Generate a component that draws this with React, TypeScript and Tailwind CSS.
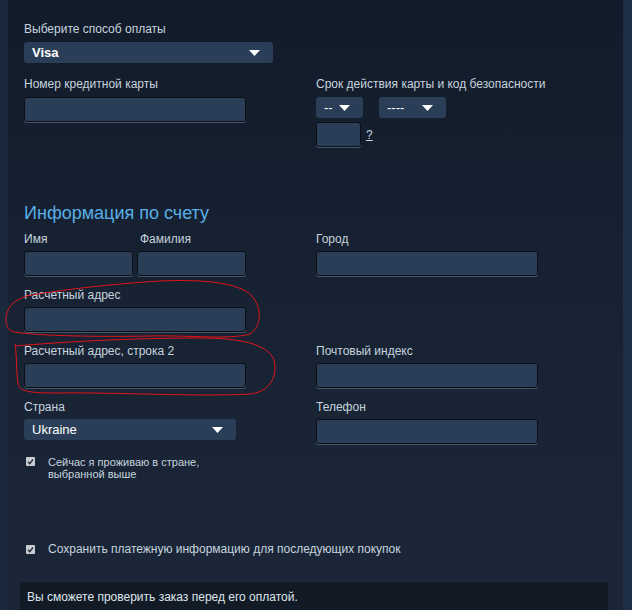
import React from 'react';

const font = { fontFamily: '"Liberation Sans", Arial, sans-serif' };

const Arrow = () => (
  <svg width="11" height="6" viewBox="0 0 11 6" className="shrink-0">
    <path d="M0 0h11L5.5 6z" fill="#fff" />
  </svg>
);

const Select = ({ value, className }: { value: string; className: string }) => (
  <div className={`flex h-[21px] items-center justify-between rounded-[3px] bg-[#2a3e58] pl-2 pr-[13px] text-[13px] text-white ${className}`}>
    <span>{value}</span>
    <Arrow />
  </div>
);

const Input = ({ className }: { className: string }) => (
  <div className={`h-[25px] rounded-[3px] border border-[#0b0f15] bg-[#2a3e58] shadow-[0_1px_0_#46566a] ${className}`} />
);

const Label = ({ children, className = '' }: { children: React.ReactNode; className?: string }) => (
  <div className={`h-4 text-[12px] leading-4 text-[#c6d4df] ${className}`}>{children}</div>
);

const Check = () => (
  <div className="flex h-[9px] w-[9px] shrink-0 items-center justify-center rounded-[1px] bg-[#c9ccd1]">
    <svg width="7" height="7" viewBox="0 0 7 7">
      <path d="M1 3.8l1.8 1.8L6 1.4" stroke="#2b2f36" strokeWidth="1.5" fill="none" />
    </svg>
  </div>
);

// hand-drawn red rings over the address fields
const Scribbles = () => (
  <svg className="pointer-events-none absolute left-0 top-0" width="632" height="610" fill="none" stroke="#e0141b" strokeWidth="1">
    <path d="M26 296 C 60 290, 110 284, 160 281 C 205 279, 240 283, 252 296 C 262 308, 262 326, 250 334 C 230 340, 190 335, 150 336 C 100 337, 40 336, 14 332 C 2 328, 5 312, 12 304 C 16 300, 22 298, 26 296" />
    <path d="M16 346 C 60 342, 130 338, 200 338 C 240 338, 268 344, 274 360 C 278 376, 270 392, 250 394 C 200 397, 110 392, 60 393 C 30 393, 20 392, 18 384 C 16 370, 17 355, 15 344" />
  </svg>
);

export default function App() {
  return (
    <div className="relative flex h-[610px] w-[632px] overflow-hidden bg-[#172233]" style={font}>
      <div className="w-2 bg-[#1a293b]" />
      <div className="relative flex-1 bg-gradient-to-b from-[#121b29] via-[#172233] to-[#1b2738] pl-4 pt-[21px]">
        <Label>Выберите способ оплаты</Label>
        <Select value="Visa" className="mt-[5px] w-[249px] font-bold" />

        <div className="mt-[13px] flex">
          <div className="w-[292px]">
            <Label>Номер кредитной карты</Label>
            <Input className="mt-[5px] w-[222px]" />
          </div>
          <div>
            <Label>Срок действия карты и код безопасности</Label>
            <div className="mt-[5px] flex gap-4">
              <Select value="--" className="w-[47px]" />
              <Select value="----" className="w-[67px]" />
            </div>
            <div className="mt-[4px] flex items-center gap-[5px]">
              <Input className="w-[45px]" />
              <span className="text-[12px] text-[#c6d4df] underline">?</span>
            </div>
          </div>
        </div>

        <div className="mt-[56px] h-5 text-[18px] leading-5 text-[#5aafe8]">Информация по счету</div>

        <div className="mt-2 flex">
          <div className="w-[292px]">
            <div className="flex gap-1">
              <div>
                <Label>Имя</Label>
                <Input className="mt-1 w-[109px]" />
              </div>
              <div>
                <Label className="pl-[3px]">Фамилия</Label>
                <Input className="mt-1 w-[109px]" />
              </div>
            </div>
            <Label className="mt-[11px]">Расчетный адрес</Label>
            <Input className="mt-1 w-[222px]" />
            <Label className="mt-[11px]">Расчетный адрес, строка 2</Label>
            <Input className="mt-1 w-[222px]" />
            <Label className="mt-[11px]">Страна</Label>
            <Select value="Ukraine" className="mt-1 w-[212px]" />
            <div className="mt-[16px] flex gap-[13px] pl-[2px]">
              <div className="pt-[1px]"><Check /></div>
              <div className="text-[11px] leading-3 text-[#c6d4df]">
                Сейчас я проживаю в стране,
                <br />
                выбранной выше
              </div>
            </div>
          </div>
          <div>
            <Label>Город</Label>
            <Input className="mt-1 w-[222px]" />
            <div className="h-[56px]" />
            <Label className="mt-[11px]">Почтовый индекс</Label>
            <Input className="mt-1 w-[222px]" />
            <Label className="mt-[11px]">Телефон</Label>
            <Input className="mt-1 w-[222px]" />
          </div>
        </div>

        <div className="mt-[61px] flex items-center gap-[13px] pl-[2px]">
          <Check />
          <span className="text-[12px] leading-4 text-[#c6d4df]">Сохранить платежную информацию для последующих покупок</span>
        </div>

        <div className="-ml-1 mt-[25px] h-[40px] w-[588px] bg-[#111a25] pl-[7px] pt-[7px] text-[12px] leading-4 text-[#dfe6ec]">
          Вы сможете проверить заказ перед его оплатой.
        </div>
      </div>
      <div className="w-[9px] bg-[#1f2f47]" />
      <Scribbles />
    </div>
  );
}
